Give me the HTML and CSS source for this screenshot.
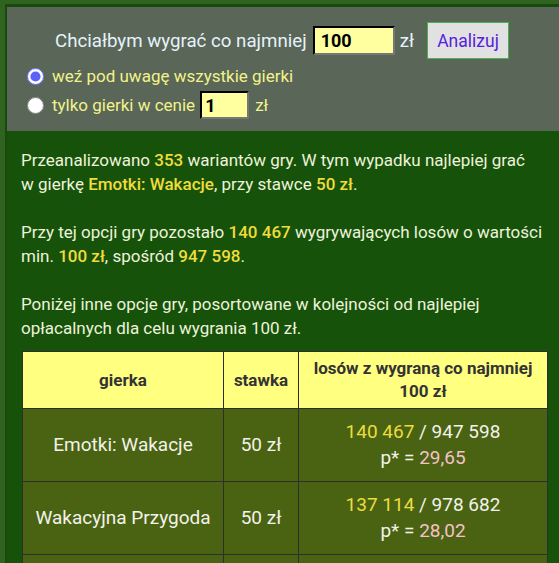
FILE: index.html
```html
<!DOCTYPE html>
<html lang="pl">
<head>
<meta charset="utf-8">
<title>Analiza gierek</title>
<link rel="stylesheet" href="styles.css">
</head>
<body>
<div class="page">
  <div class="panel">
    <div class="ask">
      <span class="ask-text">Chciałbym wygrać co najmniej</span>
      <input class="amount" type="text" value="100">
      <span class="ask-text">zł</span>
      <button class="go">Analizuj</button>
    </div>
    <label class="opt"><input class="radio" type="radio" name="m" checked><span>weź pod uwagę wszystkie gierki</span></label>
    <label class="opt"><input class="radio" type="radio" name="m"><span>tylko gierki w cenie</span><input class="price" type="text" value="1"><span>zł</span></label>
  </div>
  <div class="main">
    <p class="summary">Przeanalizowano <b class="hl">353</b> wariantów gry. W tym wypadku najlepiej grać<br>w gierkę <b class="hl">Emotki: Wakacje</b>, przy stawce <b class="hl">50 zł</b>.<br><br>Przy tej opcji gry pozostało <b class="hl">140 467</b> wygrywających losów o wartości min. <b class="hl">100 zł</b>, spośród <b class="hl">947 598</b>.<br><br>Poniżej inne opcje gry, posortowane w kolejności od najlepiej opłacalnych dla celu wygrania 100 zł.</p>
    <table class="results">
      <thead>
        <tr><th class="c1">gierka</th><th class="c2">stawka</th><th class="c3">losów z wygraną co najmniej 100 zł</th></tr>
      </thead>
      <tbody>
        <tr><td>Emotki: Wakacje</td><td>50 zł</td><td><span class="win">140 467</span> / 947 598<br>p* = <span class="p">29,65</span></td></tr>
        <tr><td>Wakacyjna Przygoda</td><td>50 zł</td><td><span class="win">137 114</span> / 978 682<br>p* = <span class="p">28,02</span></td></tr>
        <tr><td>Złota Seria</td><td>20 zł</td><td><span class="win">98 210</span> / 812 400<br>p* = <span class="p">24,11</span></td></tr>
      </tbody>
    </table>
  </div>
</div>
</body>
</html>
```

FILE: styles.css
```css
html, body {
  margin: 0;
  padding: 0;
}
body {
  background: #30631f;
  font-family: Roboto, "Liberation Sans", sans-serif;
  overflow: hidden;
}
.page {
  margin: 4px 0 0 5px;
  border-top: 3px solid #184a0d;
  border-left: 2px solid #184a0d;
  background: #165209;
  min-height: 600px;
}
.panel {
  background: #596658;
  padding: 15px 0 12px 20px;
}
.ask {
  display: flex;
  align-items: center;
  justify-content: center;
  padding-right: 22px;
  height: 37px;
}
.ask-text {
  color: #e6f2fb;
  font-size: 18.7px;
}
.amount {
  box-sizing: border-box;
  width: 82px;
  height: 29px;
  margin: 0 5px 0 6px;
  padding: 0 0 0 6px;
  background: #ffffa0;
  border: 2px inset #777;
  border-top-color: #222;
  border-left-color: #222;
  font: bold 18px Roboto, "Liberation Sans", sans-serif;
  color: #000;
}
.go {
  box-sizing: border-box;
  width: 82px;
  height: 37px;
  margin-left: 13px;
  background: #e1e1e1;
  border: 1px solid #4caf50;
  color: #5522dd;
  font: 17.5px Roboto, "Liberation Sans", sans-serif;
  padding: 0;
}
.opt {
  display: flex;
  align-items: center;
  color: #f2f28a;
  font-size: 17px;
}
.opt:first-of-type {
  margin-top: 5px;
  height: 24px;
}
.opt + .opt {
  margin-top: 3px;
}
.radio {
  width: 17px;
  height: 17px;
  margin: 0 8px 0 0;
  accent-color: #5b62fb;
}
.price {
  box-sizing: border-box;
  width: 49px;
  height: 28px;
  margin: 0 6px 0 5px;
  padding: 0 0 0 3px;
  background: #ffffa0;
  border: 2px inset #777;
  border-top-color: #222;
  border-left-color: #222;
  font: bold 18px Roboto, "Liberation Sans", sans-serif;
  color: #000;
}
.main {
  padding: 17px 12px 0 14px;
}
.summary {
  margin: 0 0 11px 0;
  color: #eef2dc;
  font-size: 17px;
  line-height: 24px;
}
.hl {
  color: #f0dc3c;
  font-weight: 500;
}
.results {
  margin-left: 1px;
  width: 526px;
  border-collapse: collapse;
  table-layout: fixed;
}
.results th, .results td {
  border: 1px solid #2e2e2e;
  text-align: center;
}
.results th {
  background: #ffff80;
  color: #333;
  font-size: 17px;
  font-weight: bold;
  line-height: 23px;
  padding: 5px 8px;
  height: 46px;
}
.c1 { width: 184px; }
.c2 { width: 58px; }
.results td {
  background: #4a6312;
  color: #f2f2ea;
  font-size: 19px;
  line-height: 26px;
  padding: 10px 6px;
  height: 52px;
}
.win { color: #ecdc3e; }
.p { color: #f5c2c8; }
```
